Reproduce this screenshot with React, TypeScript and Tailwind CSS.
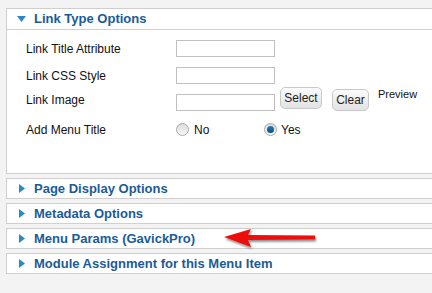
import React from "react";

function Tri({ open }: { open?: boolean }) {
  return open ? (
    <svg width="9" height="6" viewBox="0 0 9 6" className="mr-[8px]">
      <path d="M0 0 H9 L4.5 6 Z" fill="#2a8ac6" />
    </svg>
  ) : (
    <svg width="6" height="9" viewBox="0 0 6 9" className="ml-[2px] mr-[9px]">
      <path d="M0 0 L6 4.5 L0 9 Z" fill="#2a8ac6" />
    </svg>
  );
}

function Radio({ checked }: { checked?: boolean }) {
  return (
    <span className="relative inline-flex w-[13px] h-[13px] rounded-full border border-[#a9a9a9] bg-gradient-to-b from-[#dcdcdc] to-[#f7f7f7] items-center justify-center">
      {checked && (
        <span className="w-[7px] h-[7px] rounded-full bg-gradient-to-b from-[#1d7fb8] to-[#0b4f7e]" />
      )}
    </span>
  );
}

function Btn({ label, w }: { label: string; w: string }) {
  return (
    <button
      className={`${w} h-[22px] rounded-[5px] border border-[#c8c8c8] bg-gradient-to-b from-[#fbfbfb] to-[#e2e2e2] text-[12px] text-[#222] leading-none`}
    >
      {label}
    </button>
  );
}

function Row({ label, children }: { label: string; children: React.ReactNode }) {
  return (
    <div className="flex items-center h-[27px]">
      <div className="w-[169px] pl-[19px] text-[12px] text-[#111]">{label}</div>
      {children}
    </div>
  );
}

function Panel({ title, arrow }: { title: string; arrow?: boolean }) {
  return (
    <div className="relative mt-[4px] h-[21px] border border-[#cfcfcf] bg-white flex items-center pl-[10px]">
      <Tri />
      <span className="text-[13px] font-bold text-[#1a5b97]">{title}</span>
      {arrow && (
        <svg
          width="100"
          height="24"
          viewBox="0 0 100 24"
          className="absolute left-[213px] top-[-2px]"
        >
          <defs>
            <filter id="sh" x="-10%" y="-40%" width="120%" height="180%">
              <feDropShadow dx="1" dy="2" stdDeviation="1.3" floodColor="#000" floodOpacity="0.45" />
            </filter>
          </defs>
          <path
            d="M4 10 L31 2 L28 8 L95 8.5 L95 12.5 L28 13 L31 20 Z"
            fill="#ee1111"
            filter="url(#sh)"
          />
        </svg>
      )}
    </div>
  );
}

export default function App() {
  return (
    <div
      className="w-[432px] h-[293px] overflow-hidden bg-[#f3f3f3] pt-[8px] pl-[6px]"
      style={{ fontFamily: '"Liberation Sans", Arial, sans-serif' }}
    >
      <div className="w-[440px]">
        <div className="h-[166px] border border-[#cfcfcf] bg-white">
          <div className="h-[21px] border-b border-[#cfcfcf] flex items-center pl-[10px]">
            <Tri open />
            <span className="text-[13px] font-bold text-[#1a5b97]">Link Type Options</span>
          </div>
          <div className="pt-[5px]">
            <Row label="Link Title Attribute">
              <input className="w-[99px] h-[17px] border border-[#c0c0c0] bg-white" />
            </Row>
            <Row label="Link CSS Style">
              <input className="w-[99px] h-[17px] border border-[#c0c0c0] bg-white" />
            </Row>
            <div className="flex items-end h-[27px] pb-[5px]">
              <div className="w-[169px] pl-[19px] text-[12px] text-[#111] self-center">Link Image</div>
              <input className="w-[99px] h-[17px] border border-[#c0c0c0] bg-white" />
              <div className="ml-[5px] flex items-start self-end">
                <Btn label="Select" w="w-[42px]" />
                <div className="ml-[10px]">
                  <Btn label="Clear" w="w-[37px]" />
                </div>
                <span className="ml-[9px] text-[11px] text-[#111] leading-none mt-[2px]">Preview</span>
              </div>
            </div>
            <Row label="Add Menu Title">
              <div className="flex items-center w-[88px]">
                <Radio />
                <span className="ml-[5px] text-[12px] text-[#111]">No</span>
              </div>
              <div className="flex items-center">
                <Radio checked />
                <span className="ml-[4px] text-[12px] text-[#111]">Yes</span>
              </div>
            </Row>
          </div>
        </div>
        <Panel title="Page Display Options" />
        <Panel title="Metadata Options" />
        <Panel title="Menu Params (GavickPro)" arrow />
        <Panel title="Module Assignment for this Menu Item" />
      </div>
    </div>
  );
}
